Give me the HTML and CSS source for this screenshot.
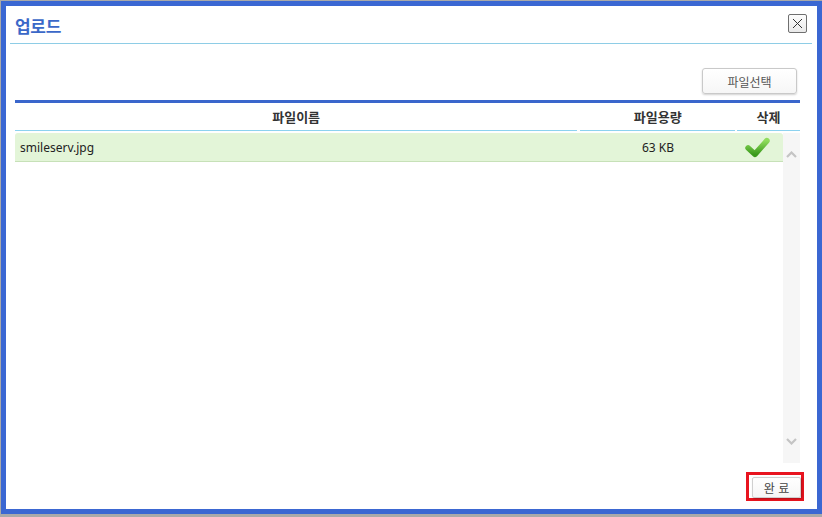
FILE: index.html
```html
<!DOCTYPE html>
<html lang="ko">
<head>
<meta charset="utf-8">
<title>업로드</title>
<link rel="stylesheet" href="styles.css">
</head>
<body>
<div class="dialog">
  <div class="dlg-head">
    <h1 class="dlg-title">업로드</h1>
    <button class="close-btn" type="button" aria-label="닫기">
      <svg width="11" height="11" viewBox="0 0 11 11"><path d="M1 1 L10 10 M10 1 L1 10" stroke="#333" stroke-width="1" fill="none"/></svg>
    </button>
  </div>
  <div class="dlg-body">
    <div class="toolbar">
      <button class="btn select-btn" type="button">파일선택</button>
    </div>
    <div class="table">
      <div class="thead">
        <div class="th col-name">파일이름</div>
        <div class="th col-size">파일용량</div>
        <div class="th col-del">삭제</div>
      </div>
      <div class="list">
        <div class="rows">
          <div class="row">
            <div class="td col-name name-cell">smileserv.jpg</div>
            <div class="td col-size">63 KB</div>
            <div class="td col-del">
              <svg width="27" height="23" viewBox="0 0 26 22">
                <defs>
                  <linearGradient id="g" x1="0" y1="0" x2="0" y2="1">
                    <stop offset="0" stop-color="#8fdc5c"/>
                    <stop offset="1" stop-color="#3a9a1c"/>
                  </linearGradient>
                </defs>
                <path d="M4 11.5 L10.5 17.5 L22 4.5" stroke="url(#g)" stroke-width="5.5" stroke-linecap="round" stroke-linejoin="round" fill="none"/>
              </svg>
            </div>
          </div>
        </div>
        <div class="scrollbar">
          <svg class="arrow" width="11" height="7" viewBox="0 0 11 7"><path d="M1 6 L5.5 1.5 L10 6" stroke="#c4c4c4" stroke-width="2.2" fill="none"/></svg>
          <svg class="arrow" width="11" height="7" viewBox="0 0 11 7"><path d="M1 1 L5.5 5.5 L10 1" stroke="#c4c4c4" stroke-width="2.2" fill="none"/></svg>
        </div>
      </div>
    </div>
    <div class="footer">
      <div class="highlight">
        <button class="btn done-btn" type="button">완 료</button>
      </div>
    </div>
  </div>
</div>
</body>
</html>
```
FILE: styles.css
```css
* { box-sizing: border-box; }
html, body { margin: 0; padding: 0; }
body {
  background: #a9a9a9;
  width: 822px;
  height: 517px;
  overflow: hidden;
  font-family: "Noto Sans", "Noto Sans CJK KR", sans-serif;
  color: #222;
}
.dialog {
  margin: 1px 0 0 1px;
  width: 821px;
  height: 513px;
  border: 5px solid #3b67d2;
  background: #fff;
  display: flex;
  flex-direction: column;
}
.dlg-head {
  height: 38px;
  margin: 0 5px 0 4px;
  padding: 0 5px 0 5px;
  border-bottom: 1px solid #8ecde6;
  display: flex;
  align-items: center;
  justify-content: space-between;
}
.dlg-title {
  margin: 0;
  font-family: "Noto Sans CJK KR", sans-serif;
  font-size: 17px;
  font-weight: 700;
  color: #3b68c8;
  line-height: 20px;
  letter-spacing: -0.3px;
  position: relative;
  top: 1px;
}
.close-btn {
  width: 19px;
  height: 19px;
  padding: 0;
  margin-top: -2px;
  border: 1px solid #6f6f6f;
  border-radius: 2px;
  background: linear-gradient(#fdfdfd, #e9e9e9);
  display: flex;
  align-items: center;
  justify-content: center;
}
.dlg-body {
  flex: 1;
  padding: 0 17px 0 9px;
  display: flex;
  flex-direction: column;
}
.toolbar {
  height: 56px;
  padding: 24px 3px 6px 0;
  display: flex;
  justify-content: flex-end;
}
.btn {
  font-family: "Noto Sans CJK KR", sans-serif;
  font-size: 12px;
  color: #555;
  background: linear-gradient(#ffffff, #f6f6f6);
  border: 1px solid #c9c9c9;
  border-radius: 3px;
  box-shadow: 0 1px 2px rgba(0,0,0,0.18);
  padding: 0;
  cursor: pointer;
}
.select-btn {
  width: 95px;
  height: 26px;
}
.table {
  border-top: 3px solid #3a66cc;
  display: flex;
  flex-direction: column;
}
.thead {
  height: 28px;
  display: flex;
  gap: 2px;
}
.th {
  font-family: "Noto Sans CJK KR", sans-serif;
  font-size: 13px;
  font-weight: 700;
  color: #333;
  text-align: center;
  line-height: 27px;
  border-bottom: 1px solid #8dd2ef;
}
.thead .col-name { width: 563px; margin-right: 1px; }
.thead .col-size { width: 155px; }
.thead .col-del { width: 63px; }
.list {
  height: 332px;
  display: flex;
}
.rows {
  flex: 1;
  padding-top: 2px;
}
.row {
  height: 29px;
  background: #e3f5d8;
  border-bottom: 1px solid #c7e1b8;
  border-radius: 3px 3px 0 0;
  display: flex;
  align-items: center;
}
.td {
  font-size: 12px;
  color: #222;
}
.row .col-name { width: 566px; }
.row .col-size { width: 154px; text-align: center; }
.row .col-del { width: 44px; display: flex; justify-content: center; padding-top: 1px; }
.name-cell { padding-left: 5px; }
.scrollbar {
  width: 17px;
  margin-top: 2px;
  background: #f6f6f6;
  display: flex;
  flex-direction: column;
  align-items: center;
  justify-content: space-between;
  padding: 18px 0 18px 0;
}
.footer {
  flex: 1;
  display: flex;
  justify-content: flex-end;
  align-items: flex-start;
  padding: 9px 0 0 0;
  margin-right: -4px;
}
.highlight {
  border: 3px solid #e8141f;
  padding: 1px 1px 2px 3px;
  width: 58px;
  height: 29px;
}
.done-btn {
  width: 49px;
  height: 21px;
  color: #444;
  border-color: #d0d0d0;
  border-radius: 2px;
  box-shadow: 1px 1px 2px rgba(0,0,0,0.25);
}
```
